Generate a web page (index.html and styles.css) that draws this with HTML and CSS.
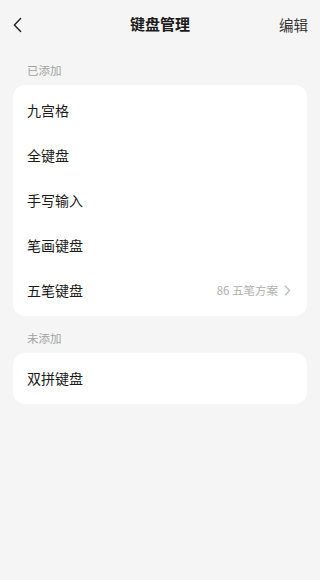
FILE: index.html
```html
<!DOCTYPE html>
<html lang="zh">
<head>
<meta charset="utf-8">
<meta name="viewport" content="width=device-width, initial-scale=1">
<link rel="stylesheet" href="styles.css">
</head>
<body>
<div class="page">
  <header class="topbar">
    <span class="back">
      <svg width="10" height="16" viewBox="0 0 10 16"><path d="M7.6 1.5 L1.4 8 L7.6 14.5" fill="none" stroke="#222" stroke-width="1.4" stroke-linecap="round" stroke-linejoin="round"/></svg>
    </span>
    <h1 class="title">键盘管理</h1>
    <span class="edit">编辑</span>
  </header>

  <div class="label first">已添加</div>
  <div class="card">
    <div class="row">九宫格</div>
    <div class="row">全键盘</div>
    <div class="row">手写输入</div>
    <div class="row">笔画键盘</div>
    <div class="row">
      <span>五笔键盘</span>
      <span class="extra">86 五笔方案
        <svg width="7" height="11" viewBox="0 0 7 11"><path d="M1.2 1 L5.6 5.5 L1.2 10" fill="none" stroke="#bbb" stroke-width="1.1" stroke-linecap="round" stroke-linejoin="round"/></svg>
      </span>
    </div>
  </div>

  <div class="label">未添加</div>
  <div class="card">
    <div class="row">双拼键盘</div>
  </div>
</div>
</body>
</html>
```

FILE: styles.css
```css
html, body {
  margin: 0;
  padding: 0;
  background: #f5f5f5;
}
body {
  font-family: "Noto Sans CJK SC", "Noto Sans", sans-serif;
  color: #1a1a1a;
}
.page {
  width: 320px;
  min-height: 580px;
  padding: 0 13px;
  box-sizing: border-box;
}
.topbar {
  height: 50px;
  display: flex;
  align-items: center;
  justify-content: space-between;
  position: relative;
  padding-bottom: 2px;
  box-sizing: border-box;
}
.back {
  display: flex;
  align-items: center;
  width: 28px;
  margin-top: 2px;
}
.title {
  position: absolute;
  left: 0;
  right: 0;
  top: 0;
  line-height: 48px;
  margin: 0;
  text-align: center;
  font-size: 15px;
  font-weight: 700;
  color: #1a1a1a;
  pointer-events: none;
}
.edit {
  font-size: 14.5px;
  color: #333;
  margin-right: -1px;
}
.label {
  font-size: 11.5px;
  line-height: 17px;
  color: #a3a3a3;
  padding-left: 14px;
  margin: 14px 0 6px;
}
.label.first {
  margin-top: 12px;
}
.card {
  background: #fff;
  border-radius: 12px;
  padding: 4px 0 2px;
}
.row {
  height: 45px;
  display: flex;
  align-items: center;
  justify-content: space-between;
  padding: 0 14px 3px;
  box-sizing: border-box;
  font-size: 14px;
  color: #1a1a1a;
}
.extra {
  display: flex;
  align-items: center;
  gap: 6px;
  font-size: 11.5px;
  color: #b0b0b0;
  margin-right: 2px;
}
```
